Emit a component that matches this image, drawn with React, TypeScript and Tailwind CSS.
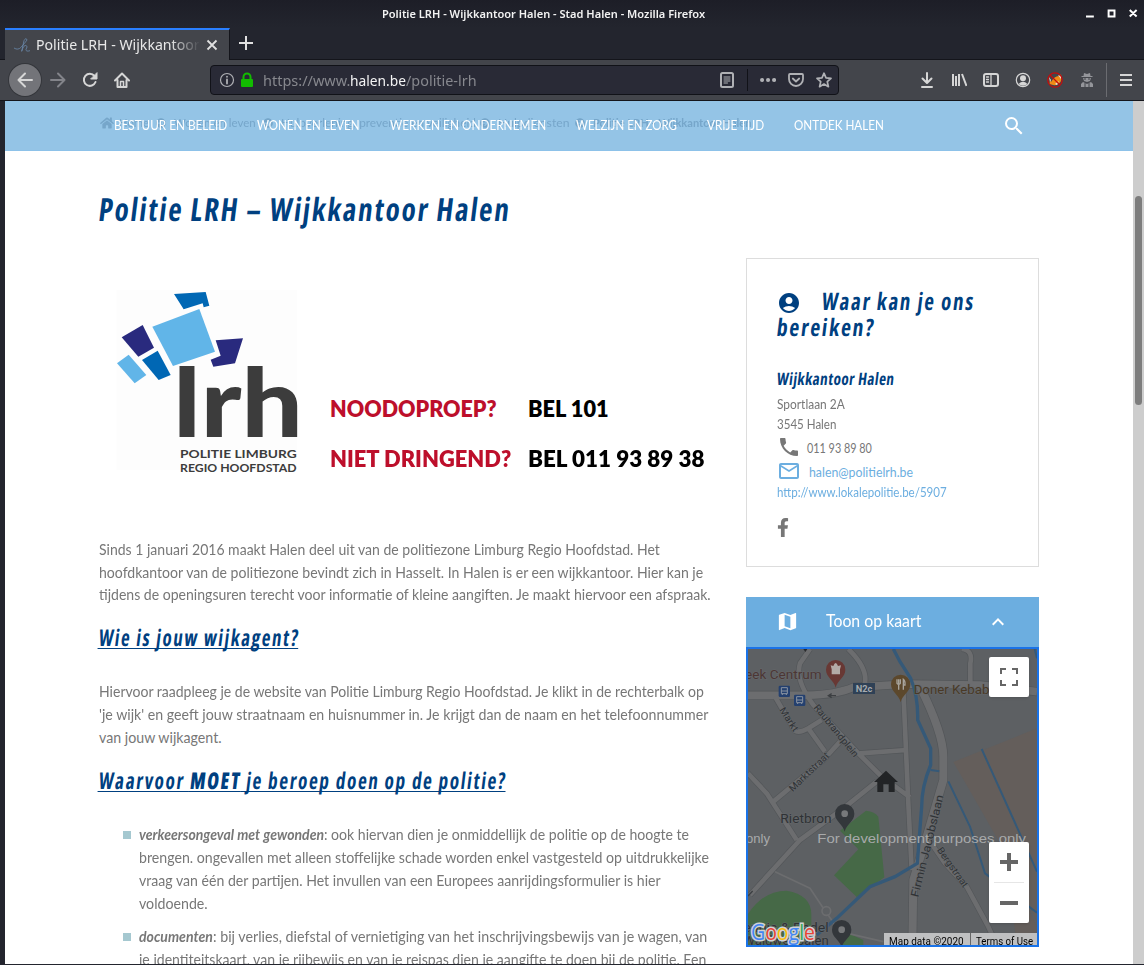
import { useLayoutEffect, useRef, useState, type ReactNode } from "react";
import { FaArrowCircleRight, FaFacebookF, FaHome } from "react-icons/fa";
import { MdAccountCircle, MdExpandLess, MdMailOutline, MdMap, MdPhone, MdSearch } from "react-icons/md";

/* A run of text condensed or stretched so that it fills exactly `w` pixels, optionally slanted. */
function Fit({ w, slant = 0, className = "", children }: { w: number; slant?: number; className?: string; children: ReactNode }) {
  const ref = useRef<HTMLSpanElement>(null);
  const [scale, setScale] = useState(1);
  useLayoutEffect(() => {
    if (ref.current && ref.current.offsetWidth > 0) setScale(w / ref.current.offsetWidth);
  }, [w]);
  return (
    <span className="inline-block whitespace-pre" style={{ width: w }}>
      <span ref={ref} className={`inline-block origin-left whitespace-pre ${className}`} style={{ transform: `skewX(${-slant}deg) scaleX(${scale})` }}>
        {children}
      </span>
    </span>
  );
}

function Icon({ children, className = "" }: { children: ReactNode; className?: string }) {
  return (
    <svg viewBox="0 0 16 16" className={`size-4 shrink-0 ${className}`} fill="none" stroke="currentColor" strokeWidth="2" strokeLinecap="round" strokeLinejoin="round">
      {children}
    </svg>
  );
}

function TitleBar() {
  return (
    <div className="flex h-7 items-center bg-linear-to-b from-[#1d1e27] to-[#23252e] pl-[382px] text-[11.500px] font-semibold text-[#f2f2f2] font-['Noto_Sans',sans-serif]">
      <Fit w={323}>Politie LRH - Wijkkantoor Halen - Stad Halen - Mozilla Firefox</Fit>
      <svg viewBox="0 0 60 12" className="ml-[380px] h-3 w-[60px]" stroke="#fff" fill="none" strokeWidth="2">
        <path d="M1 9H9M24 3H30V9H24ZM45.500 2.500L52.500 9M52.500 2.500L45.500 9" transform="translate(0 -0.500)" />
      </svg>
    </div>
  );
}

function TabBar() {
  return (
    <div className="flex h-8 border-b border-[#14151b] bg-[#23252e] pl-[5px]">
      <div className="-mb-px flex w-[225px] items-center border-t-2 border-r border-r-[#14151b] border-t-[#2a7fff] bg-[#43454b] pl-[9px]">
        <svg viewBox="0 0 48 42" className="h-3.5 w-4" fill="none" stroke="#6d8eb4" strokeWidth="2.200">
          <path d="M0 30Q12 38 22 27T39 6Q36 -3 30 8L23 40Q30 18 37 23Q42 25 36 34Q35 42 48 38" />
        </svg>
        <div className="ml-1.5 w-[164px] overflow-hidden text-[15px] leading-[22px] text-[#e9e9e9] [mask-image:linear-gradient(to_right,black_82%,transparent)] font-['Noto_Sans',sans-serif]">
          <Fit w={164} className="-translate-y-px">Politie LRH - Wijkkantoor</Fit>
        </div>
        <svg viewBox="0 0 12 12" className="ml-[6px] size-3" stroke="#e0e0e0" strokeWidth="1.800"><path d="M1.500 1.500L10.500 10.500M10.500 1.500L1.500 10.500" /></svg>
      </div>
      <svg viewBox="0 0 14 14" className="mt-2 ml-[9px] size-3.5" stroke="#e0e0e0" strokeWidth="2"><path d="M7 0V14M0 7H14" /></svg>
    </div>
  );
}

function Toolbar() {
  return (
    <div className="flex h-[41px] items-center border-b border-[#14151b] bg-[#43454b] pl-[9px] text-[#d6d6d6]">
      <div className="flex size-8 items-center justify-center rounded-full bg-[#737479] ring-1 ring-[#34363b]">
        <Icon><path d="M15 8H1.500M8 1.500L1.500 8L8 14.500" /></Icon>
      </div>
      <Icon className="ml-[9px] text-[#83848a]"><path d="M1 8H14.500M8 1.500L14.500 8L8 14.500" /></Icon>
      <Icon className="ml-4"><path d="M13.500 10A6 6 0 1 1 12.500 4" /><path d="M15 1V7H9Z" fill="currentColor" strokeWidth="1" /></Icon>
      <Icon className="ml-4"><path d="M1 8.500L8 1.500L15 8.500M3.500 8V15H12.500V8" /><path d="M6.500 15V9.500H9.500V15" strokeWidth="1.500" /></Icon>
      <div className="ml-20 flex h-[30px] w-[629px] items-center rounded-[4px] border border-[#111218] bg-[#292a36] pl-[8px] text-[#b0b1b5]">
        <Icon><circle cx="8" cy="8" r="6.500" strokeWidth="1.200" /><path d="M8 7.500V11.500M8 4.700V4.800" strokeWidth="1.800" /></Icon>
        <svg viewBox="0 0 14 16" className="ml-[5px] h-4 w-3.5"><path d="M3.500 8V5A3.500 3.500 0 0 1 10.500 5V8" fill="none" stroke="#12bc00" strokeWidth="2" /><rect x="1" y="7" width="12" height="8" rx="1" fill="#12bc00" /></svg>
        <div className="ml-[9px] w-[450px] text-[15px] text-[#87888e] font-['Noto_Sans',sans-serif]">
          <Fit w={87}>https://www.</Fit><Fit w={56} className="text-[#f4f4f4]">halen.be</Fit><Fit w={71}>/politie-lrh</Fit>
        </div>
        <Icon className="ml-[6px]"><rect x="2" y="1" width="12" height="14" rx="1.500" /><path d="M5 5H11M5 7H11M5 9H11M5 11H8.500" strokeWidth="1" /></Icon>
        <div className="ml-3 h-[22px] w-px bg-[#111218]" />
        <Icon className="ml-3"><path d="M2 8H2.100M8 8H8.100M14 8H14.100" strokeWidth="4" /></Icon>
        <Icon className="ml-3"><path d="M2 2H14Q15 2 15 3V7A7 7 0 0 1 1 7V3Q1 2 2 2ZM4.800 6.500L8 9.500L11.200 6.500" strokeWidth="1.800" /></Icon>
        <Icon className="ml-3"><path d="M8 1.200L10 5.800L15 6.300L11.300 9.700L12.400 14.700L8 12.100L3.600 14.700L4.700 9.700L1 6.300L6 5.800Z" strokeWidth="1.700" /></Icon>
      </div>
      <div className="ml-20 flex items-center gap-4">
        <Icon><path d="M8 1V10.500M3.500 6.500L8 11L12.500 6.500M3 15H13" /></Icon>
        <Icon><path d="M2 2V14M5 4V14M8 2V14M11 2L15.500 14" strokeLinecap="butt" /></Icon>
        <Icon><rect x="1" y="2" width="14" height="12" rx="2" /><path d="M8 2V14M3.500 5H5.500M3.500 7.500H5.500M3.500 10H5.500" strokeWidth="1.300" /></Icon>
        <Icon><circle cx="8" cy="8" r="6.700" strokeWidth="1.200" /><circle cx="8" cy="6.200" r="3" fill="currentColor" stroke="none" /><path d="M3.500 12Q8 7.500 12.500 12Q8 15.500 3.500 12Z" fill="currentColor" stroke="none" /></Icon>
        <svg viewBox="0 0 16 16" className="size-4"><path d="M3 8L4 10Q8 3 13 4L14 2L14.500 7Q13 14 6 13L2.500 12Z" fill="#f08b16" /><path d="M2 5L4 8L3 10ZM11 3L14 4L14 7ZM8 12L12 9L10 13Z" fill="#ece5d8" /><circle cx="8" cy="8" r="7.200" fill="none" stroke="#c60c0c" strokeWidth="1.300" /><path d="M3 3L13 13" stroke="#c60c0c" strokeWidth="1.300" /></svg>
        <svg viewBox="0 0 16 16" className="size-4" fill="#94959a"><path d="M5 1L8 2L11 1L11.500 4H13.500V5H2.500V4H4.500ZM4 6H12L11 9L8 10L5 9ZM4 10L8 12L12 10L14 12V15H2V12Z" /><path d="M5 7H7M9 7H11M6 11V15M10 11V15" stroke="#43454b" /></svg>
      </div>
      <div className="ml-[11px] h-[34px] w-px bg-[#6b6c71]" />
      <Icon className="ml-[11px]"><path d="M2 3H14M2 8H14M2 13H14" strokeLinecap="butt" /></Icon>
    </div>
  );
}

function Navigation() {
  return (
    <nav className="relative h-[50px] border-b border-[#8dc2e9] bg-[#94c4e6] font-[Lato,sans-serif]">
      <div className="flex h-[43px] items-center pl-[95px] text-[12px] text-[#76a6ca]">
        <FaHome className="size-3.5" />
        <Fit w={30} className="ml-[5px]">Home</Fit>
        <FaArrowCircleRight className="ml-[12px] size-2.5" />
        <Fit w={82} className="ml-2">Wonen en leven</Fit>
        <FaArrowCircleRight className="ml-[15px] size-2.5" />
        <Fit w={195} className="ml-2">Hulpverlening, preventie en veiligheid</Fit>
        <FaArrowCircleRight className="ml-[12px] size-2.5" />
        <Fit w={71} className="ml-2">Hulpdiensten</Fit>
        <FaArrowCircleRight className="ml-[14px] size-2.5" />
        <Fit w={158} className="ml-2 font-bold">Politie LRH - Wijkkantoor Halen</Fit>
      </div>
      <div className="absolute inset-0 flex items-center pl-[109px] text-[14px] text-white">
        <div className="flex -translate-y-px gap-[30px]">
          <Fit w={113}>BESTUUR EN BELEID</Fit>
          <Fit w={103}>WONEN EN LEVEN</Fit>
          <Fit w={156}>WERKEN EN ONDERNEMEN</Fit>
          <Fit w={101}>WELZIJN EN ZORG</Fit>
          <Fit w={57}>VRIJE TIJD</Fit>
          <Fit w={90}>ONTDEK HALEN</Fit>
        </div>
        <MdSearch className="ml-[118px] size-6" />
      </div>
    </nav>
  );
}

function Logo() {
  return (
    <svg viewBox="75 360 555 570" className="ml-4 mt-8 h-[190px] w-[185px] shrink-0">
      <rect x="80" y="360" width="541" height="540" fill="#fdfdfd" />
      <path d="M252 372L347 366L358 407L341 412L338 400L281 418Z" fill="#0067b4" />
      <path d="M187 470L328 417L375 545L249 588Z" fill="#61b5e8" />
      <path d="M95 502L158 465L192 533L145 560Z" fill="#292a7e" />
      <path d="M156 570L203 542L242 615L206 630Z" fill="#0067b4" />
      <path d="M81 580L116 554L169 615L134 640Z" fill="#61b5e8" />
      <path d="M377 511L459 505L435 580L370 590L362 569L392 557Z" fill="#292a7e" />
      <text x="250" y="802" textLength="389" lengthAdjust="spacingAndGlyphs" className="fill-[#3c3c3c] text-[288px] font-black font-[Lato,sans-serif]">lrh</text>
      <g className="fill-[#3c3c3c] text-[34px] font-bold font-[Lato,sans-serif]">
        <text x="270" y="864" textLength="350" lengthAdjust="spacingAndGlyphs">POLITIE LIMBURG</text>
        <text x="270" y="905" textLength="350" lengthAdjust="spacingAndGlyphs">REGIO HOOFDSTAD</text>
      </g>
    </svg>
  );
}

const headingFont = "font-['Open_Sans',sans-serif] font-bold text-[#004080] tracking-[2px] [font-stretch:75%]";
const underlined = "underline decoration-1 underline-offset-[2px] [text-decoration-skip-ink:none]";

function Article() {
  return (
    <main className="w-[647px] text-[15px] leading-[22.700px] text-[#777] font-[Lato,sans-serif]">
      <div className="flex h-[280px]">
        <Logo />
        <div className="ml-[30px] mt-[125px] grid h-[101px] grid-cols-[198px_auto] text-[22px] leading-[50.500px] font-extrabold text-black">
          <Fit w={167} className="translate-y-px text-[#bd0f2b]">NOODOPROEP?</Fit><Fit w={81} className="translate-y-px">BEL 101</Fit>
          <Fit w={181} className="text-[#bd0f2b]">NIET DRINGEND?</Fit><Fit w={176}>BEL 011 93 89 38</Fit>
        </div>
      </div>
      <p className="flex h-[82px] flex-col">
        <Fit w={561}>Sinds 1 januari 2016 maakt Halen deel uit van de politiezone Limburg Regio Hoofdstad. Het</Fit>
        <Fit w={604}>hoofdkantoor van de politiezone bevindt zich in Hasselt. In Halen is er een wijkkantoor. Hier kan je</Fit>
        <Fit w={612}>tijdens de openingsuren terecht voor informatie of kleine aangiften. Je maakt hiervoor een afspraak.</Fit>
      </p>
      <h2 className={`h-[60px] pt-px text-[23px] leading-[32px] ${headingFont}`}><Fit w={201} slant={7} className={underlined}>Wie is jouw wijkagent?</Fit></h2>
      <p className="flex h-[84px] flex-col">
        <Fit w={605}>Hiervoor raadpleeg je de website van Politie Limburg Regio Hoofdstad. Je klikt in de rechterbalk op</Fit>
        <Fit w={609}>'je wijk' en geeft jouw straatnaam en huisnummer in. Je krijgt dan de naam en het telefoonnummer</Fit>
        <Fit w={123} className="translate-y-px">van jouw wijkagent.</Fit>
      </p>
      <h2 className={`h-[59px] text-[23px] leading-[32px] ${headingFont}`}><Fit w={408} slant={7} className={underlined}>Waarvoor <b className="font-extrabold">MOET</b> je beroep doen op de politie?</Fit></h2>
      <ul className="flex flex-col gap-[10px] leading-[23px]">
        <li className="flex pl-6">
          <span className="mt-2 mr-2 size-2 bg-[#a5c8d0]" />
          <div className="flex flex-col">
            <div className="h-[23px]"><Fit w={185} className="font-bold italic">verkeersongeval met gewonden</Fit><Fit w={365}>: ook hiervan dien je onmiddellijk de politie op de hoogte te</Fit></div>
            <Fit w={570}>brengen. ongevallen met alleen stoffelijke schade worden enkel vastgesteld op uitdrukkelijke</Fit>
            <Fit w={522}>vraag van één der partijen. Het invullen van een Europees aanrijdingsformulier is hier</Fit>
            <Fit w={69}>voldoende.</Fit>
          </div>
        </li>
        <li className="flex pl-6">
          <span className="mt-2 mr-2 size-2 bg-[#a5c8d0]" />
          <div className="flex flex-col">
            <div className="h-[23px]"><Fit w={74} className="font-bold italic">documenten</Fit><Fit w={494}>: bij verlies, diefstal of vernietiging van het inschrijvingsbewijs van je wagen, van</Fit></div>
            <Fit w={567}>je identiteitskaart, van je rijbewijs en van je reispas dien je aangifte te doen bij de politie. Een</Fit>
          </div>
        </li>
      </ul>
    </main>
  );
}

function ContactCard() {
  return (
    <section className="h-[309px] border border-[#ddd] pt-[29px] pl-[30px] text-[13.500px] leading-5 text-[#777] font-[Lato,sans-serif]">
      <h2 className={`h-[81px] text-[24px] leading-[26px] ${headingFont}`}>
        <div className="flex h-[26px]"><MdAccountCircle className="mt-[3px] mr-[21px] size-6" /><Fit w={153} slant={7}>Waar kan je ons</Fit></div>
        <Fit w={98} slant={7}>bereiken?</Fit>
      </h2>
      <h3 className="h-[25px] text-[17px] font-bold tracking-[0.500px] text-[#004080] font-['Open_Sans',sans-serif] [font-stretch:75%]"><Fit w={118} slant={7}>Wijkkantoor Halen</Fit></h3>
      <div className="h-5"><Fit w={68}>Sportlaan 2A</Fit></div>
      <div className="h-5"><Fit w={59}>3545 Halen</Fit></div>
      <div className="flex h-[26px] items-center"><MdPhone className="mr-[6px] size-6" /><Fit w={65} className="translate-y-px">011 93 89 80</Fit></div>
      <div className="flex h-[22px] items-center text-[#6caee0]"><MdMailOutline className="mr-2 size-6" /><Fit w={104} className="translate-y-px">halen@politielrh.be</Fit></div>
      <div className="h-9 text-[#6caee0]"><Fit w={170}>http://www.lokalepolitie.be/5907</Fit></div>
      <FaFacebookF className="h-[19px] w-3" />
    </section>
  );
}

function Pin({ x, y, color }: { x: number; y: number; color: string }) {
  return <path transform={`translate(${x} ${y})`} d="M0 -29A29 29 0 0 0 -29 0C-29 24 -5 30 0 54C5 30 29 24 29 0A29 29 0 0 0 0 -29Z" fill={color} />;
}

/* Map lettering condensed to the width it has on the tiles. */
function Label({ at, w, className = "", children }: { at: string; w: number; className?: string; children: string }) {
  return <text transform={at} textLength={w} lengthAdjust="spacingAndGlyphs" className={className}>{children}</text>;
}

function MapView() {
  return (
    <div className="relative h-[300px] overflow-hidden border-2 border-[#1a73e8]">
      <svg viewBox="24 177 867 888" className="h-[296px] w-[289px]" fill="none">
        <rect x="24" y="177" width="867" height="888" fill="#5d6063" />
        <path d="M640 516L891 415V1000L820 830L700 620Z" fill="#645e5b" />
        <path d="M800 810L891 1010V1065H830L810 900Z" fill="#645e5b" />
        <path d="M300 722L378 662Q405 665 415 680L433 862L351 922L282 856L355 778ZM24 972Q70 902 140 902Q215 915 214 975V1010L190 1065H24ZM300 1065L330 1032L370 1050V1065Z" fill="#466947" />
        <g stroke="#535659" strokeLinejoin="round">
          <path d="M24 316H200Q290 314 340 292L500 282L720 285L891 305" strokeWidth="27" />
          <path d="M210 177L180 220Q165 270 220 345L355 490L425 560L510 622M325 177Q390 240 372 290M665 177Q700 180 691 220V280M105 320L160 415Q170 435 205 415L245 390M205 415L255 485M300 455L250 510L100 635M360 490L500 480M490 300L505 640L515 840M24 550L80 610L170 750M410 575L310 655L180 750L30 915M560 740L615 820L680 890L745 1010L770 1065" strokeWidth="18" />
          <path d="M540 290Q610 430 610 500V570L560 740L520 870L517 1065" strokeWidth="28" />
        </g>
        <g stroke="#6c6d6f" strokeLinejoin="round">
          <path d="M24 316H200Q290 314 340 292L500 282L720 285L891 305" strokeWidth="23" />
          <path d="M210 177L180 220Q165 270 220 345L355 490L425 560L510 622M325 177Q390 240 372 290M665 177Q700 180 691 220V280M105 320L160 415Q170 435 205 415L245 390M205 415L255 485M300 455L250 510L100 635M360 490L500 480M490 300L505 640L515 840M24 550L80 610L170 750M410 575L310 655L180 750L30 915M560 740L615 820L680 890L745 1010L770 1065" strokeWidth="14" />
          <path d="M540 290Q610 430 610 500V570L560 740L520 870L517 1065" strokeWidth="24" />
          <path d="M105 845L210 895L255 962L300 1025L430 1055" strokeWidth="5" />
        </g>
        <circle cx="259" cy="963" r="13" fill="#5d6063" stroke="#6c6d6f" strokeWidth="5" />
        <g stroke="#355978">
          <path d="M572 540L598 544M625 574L690 710L735 850L891 968M725 477L891 845M884 177L891 205" strokeWidth="6" />
          <path d="M460 177L480 215L512 265Q535 320 533 390L572 475V525Q545 590 545 650L532 820L465 860L390 890L290 985L230 1035" strokeWidth="10" />
        </g>
        <path d="M288 317H267M275 311L265 317L275 323M38 903L24 918" stroke="#3c3f42" strokeWidth="4" />
        <path d="M190 177H202L196 186Z" fill="#292b2d" />
        <rect x="339" y="279" width="66" height="33" fill="#2f4156" />
        <g fill="#24406f"><rect x="116" y="287" width="34" height="34" rx="4" /><rect x="162" y="314" width="34" height="34" rx="4" /></g>
        <g stroke="#8b94a2" strokeWidth="3"><path d="M124 293H142V311H124ZM124 303H142M127 311V315M139 311V315M170 320H188V338H170ZM170 330H188M173 338V342M185 338V342" /></g>
        <Pin x={287} y={239} color="#683834" /><path d="M272 226L280 228Q287 210 294 228L303 226L300 238V253H275V238Z" fill="#b3aaa6" />
        <Pin x={482} y={283} color="#5c482c" /><path d="M471 268V280Q476 286 481 280V268M476 268V299M490 299V268Q496 272 495 285H490" stroke="#a7a39b" strokeWidth="4" />
        <Pin x={314} y={671} color="#33373b" /><circle cx="314" cy="671" r="10" fill="#77797b" />
        <Pin x={305} y={1019} color="#33373b" /><circle cx="305" cy="1019" r="10" fill="#77797b" />
        <path d="M438 542L474 576H464V606H446V583H430V606H412V576H402Z" fill="#222426" />
        <g className="fill-[#2f3235] stroke-[#66696c] stroke-[3px] text-[41px] [paint-order:stroke] font-[Roboto,sans-serif]">
          <Label at="translate(15 267)" w={230} className="fill-[#4c3634]">eek Centrum</Label>
          <Label at="translate(521 312)" w={227} className="fill-[#493926]">Doner Kebab</Label>
          <Label at="translate(121 698)" w={154}>Rietbron</Label>
          <Label at="translate(10 1025)" w={256}>ennis &amp; Padel</Label>
          <Label at="translate(10 1065)" w={256}>Waldwegpalen</Label>
          <g className="text-[29px]">
            <Label at="translate(117 360) rotate(57)" w={80}>Markt</Label>
            <Label at="translate(220 353) rotate(51)" w={194}>Raubrandplein</Label>
            <Label at="translate(158 607) rotate(-44)" w={155}>Marktstraat</Label>
            <Label at="translate(590 780) rotate(55)" w={140}>Bergstraat</Label>
            <Label at="translate(535 923) rotate(-76)" w={315} className="text-[34px]">Firmin Jacobslaan</Label>
          </g>
        </g>
        <Label at="translate(347 305)" w={50} className="fill-[#a5aaae] text-[28px] font-bold font-[Roboto,sans-serif]">N2c</Label>
        <g className="fill-[#a8aaab] text-[40px] font-['Liberation_Sans',sans-serif]">
          <Label at="translate(18 760)" w={72}>only</Label>
          <Label at="translate(232 760)" w={626}>For development purposes only</Label>
        </g>
        <text x="33" y="1049" textLength="192" lengthAdjust="spacingAndGlyphs" className="stroke-[#cfd2d6] stroke-[9px] text-[64px] font-medium [paint-order:stroke] font-['Open_Sans',sans-serif]">
          <tspan fill="#4285f4">G</tspan><tspan fill="#ea4335">o</tspan><tspan fill="#fbbc05">o</tspan><tspan fill="#4285f4">g</tspan><tspan fill="#34a853">l</tspan><tspan fill="#ea4335">e</tspan>
        </text>
      </svg>
      <button className="absolute top-2 right-2 flex size-10 items-center justify-center rounded-[2px] bg-white shadow">
        <svg viewBox="0 0 18 18" className="size-[18px]" fill="none" stroke="#666" strokeWidth="2"><path d="M1 6V1H6M12 1H17V6M17 12V17H12M6 17H1V12" /></svg>
      </button>
      <div className="absolute right-2 bottom-[22px] flex h-[81px] w-10 flex-col items-center rounded-[2px] bg-white shadow">
        <svg viewBox="0 0 18 18" className="my-[11px] size-[18px]" stroke="#666" strokeWidth="4"><path d="M0 9H18M9 0V18" /></svg>
        <div className="h-px w-[30px] bg-[#e6e6e6]" />
        <svg viewBox="0 0 18 18" className="my-[11px] size-[18px]" stroke="#666" strokeWidth="4"><path d="M0 9H18" /></svg>
      </div>
      <div className="absolute right-0 bottom-0 flex h-3 overflow-hidden bg-[#bfc0c1] text-[10.500px] leading-[17px] text-black font-[Roboto,sans-serif]">
        <div className="border-r border-[#666] pr-[6px] pl-[5px]"><Fit w={75}>Map data ©2020</Fit></div>
        <div className="pr-1 pl-[5px]"><Fit w={57}>Terms of Use</Fit></div>
      </div>
    </div>
  );
}

export default function App() {
  return (
    <div className="h-[965px] w-[1144px] overflow-hidden bg-[#23252e]">
      <TitleBar />
      <TabBar />
      <Toolbar />
      <div className="flex h-[864px] border-b border-l-[5px] border-b-[#23252e] border-l-[#23252e]">
        <div className="h-[863px] w-[1128px] overflow-hidden bg-white">
          <Navigation />
          <div className="pl-[94px]">
            <h1 className={`h-[107px] pt-[35px] text-[32px] leading-[45px] ${headingFont}`}><Fit w={412} slant={7}>Politie LRH – Wijkkantoor Halen</Fit></h1>
            <div className="flex">
              <Article />
              <aside className="w-[293px]">
                <ContactCard />
                <div className="mt-[30px] flex h-[50px] items-center bg-[#6caee0] pb-px pl-[30px] text-[16.500px] text-white font-[Lato,sans-serif]">
                  <MdMap className="size-[23px]" />
                  <Fit w={95} className="ml-[27px]">Toon op kaart</Fit>
                  <MdExpandLess className="ml-[92px] size-6" />
                </div>
                <MapView />
              </aside>
            </div>
          </div>
        </div>
        <div className="w-[11px] bg-[#cdcdcd] pt-[95px]">
          <div className="mx-auto h-[209px] w-[7px] rounded-full bg-[#7d7d7d]" />
        </div>
      </div>
    </div>
  );
}
